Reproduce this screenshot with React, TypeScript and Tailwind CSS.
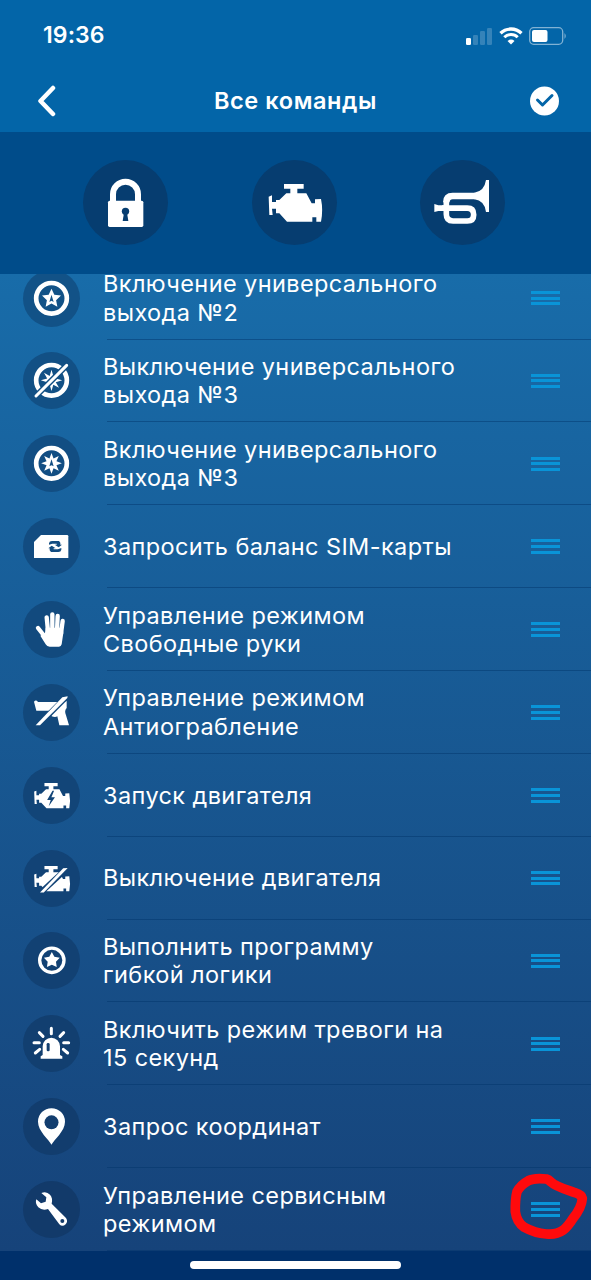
import type { ReactNode } from "react";

type Command = {
  lines: string[];
  color: string;
  icon: ReactNode;
};

const ENGINE =
  "M50 110 L60 106 V126 H72 V120 H82 L103 100 H115 V86 H96 V72 H155 V86 H136 V100 H163 L179 130 H189 V118 L207 117 Q214 150 207 185 H193 V172 H181 V185 H105 L82 160 H72 V146 H60 L62 165 H52 Z";

function starPoints(cx: number, cy: number, outer: number, inner: number, tips: number) {
  const points: string[] = [];
  for (let i = 0; i < tips * 2; i++) {
    const r = i % 2 === 0 ? outer : inner;
    const a = (Math.PI * i) / tips - Math.PI / 2;
    points.push(`${(cx + r * Math.cos(a)).toFixed(1)},${(cy + r * Math.sin(a)).toFixed(1)}`);
  }
  return points.join(" ");
}

function Glyph({ size = 171, children }: { size?: number; children: ReactNode }) {
  return (
    <svg viewBox={`0 0 ${size} ${size}`} className="size-full" fill="none">
      {children}
    </svg>
  );
}

const star5 = (
  <Glyph>
    <circle cx="85.5" cy="85" r="46" stroke="white" strokeWidth="14" />
    <polygon points={starPoints(85.5, 86, 30, 14.5, 5)} fill="white" />
    <path d="M85.5 74 L92 96 L85.5 92 L79 96 Z" fill="currentColor" />
  </Glyph>
);

const star8 = (
  <Glyph>
    <circle cx="85.5" cy="85" r="46" stroke="white" strokeWidth="14" />
    <polygon points={starPoints(85.5, 85, 31, 16, 8)} fill="white" />
    <path d="M85.5 73 L92 94 L85.5 91 L79 94 Z" fill="currentColor" />
  </Glyph>
);

const star8Off = (
  <Glyph>
    <circle cx="85.5" cy="85" r="46" stroke="white" strokeWidth="14" />
    <polygon points={starPoints(85.5, 85, 32, 14, 8)} fill="white" />
    <path d="M36 135 L134 37" stroke="currentColor" strokeWidth="18" />
    <path d="M39 132 L131 40" stroke="white" strokeWidth="9" strokeLinecap="round" />
  </Glyph>
);

const sim = (
  <Glyph>
    <path d="M54 51 H132 Q136 51 136 55 V120 H33 V72 Z" fill="white" />
    <path
      d="M78 80 V76 Q79 69 87 69 H108 L112 74 V80 H117 L107 88 L95 80 H101 V77 H88 Z"
      fill="currentColor"
    />
    <path
      d="M115 90 V95 Q114 102 106 102 H84 L80 97 V91 H76 L86 83 L98 91 H92 V94 H105 Z"
      fill="currentColor"
    />
  </Glyph>
);

const hand = (
  <Glyph>
    <path
      d="M45 81 L64 105 M71 49 L75 90 M88 40 V88 M104 45 L102 90 M119 60 L114 98"
      stroke="white"
      strokeWidth="13"
      strokeLinecap="round"
    />
    <path
      d="M68 80 H119 L121 96 L116 130 Q114 137 108 137 H80 Q72 137 68 130 L52 104 L66 96 Z"
      fill="white"
    />
  </Glyph>
);

const gunOff = (
  <Glyph>
    <path
      d="M33 53 Q39 46 45 54 H122 L131 51 V72 Q123 80 129 94 L138 124 H109 L103 97 Q97 101 86 97 L82 80 H40 Z"
      fill="white"
    />
    <path d="M43 126 L129 40" stroke="currentColor" strokeWidth="17" />
    <path d="M38 124 L118 40 L134 37 L133 42 L51 124 Z" fill="white" />
  </Glyph>
);

const engineStart = (
  <Glyph size={255}>
    <path d={ENGINE} fill="white" />
    <path d="M132 106 L108 148 H124 L115 176 L143 135 H127 L139 106 Z" fill="currentColor" />
  </Glyph>
);

const engineOff = (
  <Glyph size={255}>
    <path d={ENGINE} fill="white" />
    <path d="M78 192 L197 82" stroke="currentColor" strokeWidth="25" />
    <path d="M76 190 L180 82 L200 80 L93 190 Z" fill="white" />
  </Glyph>
);

const logic = (
  <Glyph>
    <circle cx="86.5" cy="85" r="36.5" stroke="white" strokeWidth="10" />
    <polygon points={starPoints(86.5, 85, 25, 13, 5)} fill="white" />
  </Glyph>
);

const siren = (
  <Glyph>
    <path
      d="M85 40 V56 M49 53 L60 64 M122 53 L111 64 M33 83 H49 M122 83 H137 M37 114 L50 103 M134 114 L121 103"
      stroke="white"
      strokeWidth="9"
      strokeLinecap="round"
    />
    <path d="M59 120 V94 a26 26 0 0 1 52 0 V120 L118 124 V131 H53 V124 Z" fill="white" />
    <rect x="71" y="84" width="9" height="25" rx="4" fill="currentColor" />
  </Glyph>
);

const pin = (
  <Glyph>
    <path
      d="M85.5 140 C78 124 45 100 45 71 a40.5 40.5 0 0 1 81 0 C126 100 93 124 85.5 140 Z"
      fill="white"
    />
    <circle cx="85.5" cy="73" r="21" fill="currentColor" />
  </Glyph>
);

const wrench = (
  <Glyph>
    <path
      d="M55 36 Q70 29 81 41 Q90 51 86 68 L129 111 Q136 121 128 130 Q118 139 109 130 L75 84 Q58 90 46 79 Q35 68 40 55 L54 67 L68 62 L70 49 Z"
      fill="white"
    />
    <circle cx="118" cy="120" r="6" fill="currentColor" />
  </Glyph>
);

const lock = (
  <Glyph size={255}>
    <path d="M90 126 V103 a37.5 37.5 0 0 1 75 0 V126" stroke="white" strokeWidth="18" />
    <rect x="75" y="122" width="106" height="79" rx="5" fill="white" />
    <circle cx="127.5" cy="154" r="11" fill="currentColor" />
    <path d="M123 158 H132 L136 183 H119 Z" fill="currentColor" />
  </Glyph>
);

const engine = (
  <Glyph size={255}>
    <path d={ENGINE} fill="white" />
  </Glyph>
);

const horn = (
  <Glyph size={255}>
    <path d="M198 60 H207 V156 H198 Q194 122 163 118 V98 Q193 94 198 60 Z" fill="white" />
    <path d="M165 108 H98 Q79 108 79 127" stroke="white" strokeWidth="20" />
    <path
      d="M79 125 V163 Q79 183 99 183 H142 Q161 183 161 164 Q161 144.500 142 144.500 H66"
      stroke="white"
      strokeWidth="17"
    />
    <path d="M43 132 L55 136 H72 V153 H55 L43 156 Z" fill="white" />
  </Glyph>
);

const tools = [lock, engine, horn];

const commands: Command[] = [
  { lines: ["Включение универсального", "выхода №2"], color: "text-[#125287]", icon: star5 },
  { lines: ["Выключение универсального", "выхода №3"], color: "text-[#125085]", icon: star8Off },
  { lines: ["Включение универсального", "выхода №3"], color: "text-[#124e83]", icon: star8 },
  { lines: ["Запросить баланс SIM-карты"], color: "text-[#124c81]", icon: sim },
  { lines: ["Управление режимом", "Свободные руки"], color: "text-[#124a7e]", icon: hand },
  { lines: ["Управление режимом", "Антиограбление"], color: "text-[#12487b]", icon: gunOff },
  { lines: ["Запуск двигателя"], color: "text-[#124578]", icon: engineStart },
  { lines: ["Выключение двигателя"], color: "text-[#124376]", icon: engineOff },
  { lines: ["Выполнить программу", "гибкой логики"], color: "text-[#124173]", icon: logic },
  { lines: ["Включить режим тревоги на", "15 секунд"], color: "text-[#123f70]", icon: siren },
  { lines: ["Запрос координат"], color: "text-[#123d6e]", icon: pin },
  { lines: ["Управление сервисным", "режимом"], color: "text-[#123a6a]", icon: wrench },
];

function StatusBar() {
  return (
    <div className="flex h-[70px] items-center justify-between pt-px pr-6 pl-[43px]">
      <span className="text-[23px] font-semibold tracking-[0.1px]">19:36</span>
      <div className="flex items-center gap-[6px]">
        <svg width="27" height="18" viewBox="0 0 27 18" fill="white">
          <rect x="0" y="11" width="5" height="7" rx="1.300" />
          <rect x="7" y="8" width="5" height="10" rx="1.300" opacity="0.2" />
          <rect x="14" y="4" width="5" height="14" rx="1.300" opacity="0.2" />
          <rect x="21" y="1" width="5" height="17" rx="1.300" opacity="0.2" />
        </svg>
        <svg width="24" height="18" viewBox="0 0 24 18" fill="none" stroke="white">
          <path d="M1.500 6.300 A15 15 0 0 1 22.500 6.300" strokeWidth="3.300" />
          <path d="M5.300 10.300 A9.500 9.500 0 0 1 18.700 10.300" strokeWidth="3" />
          <path d="M12 17.500 L8.500 14 A5 5 0 0 1 15.500 14 Z" fill="white" stroke="none" />
        </svg>
        <svg width="38" height="18" viewBox="0 0 38 18" fill="none">
          <rect x="0.700" y="0.700" width="33" height="16.600" rx="4" stroke="white" strokeOpacity="0.5" strokeWidth="1.300" />
          <rect x="3" y="3" width="15.500" height="12" rx="2" fill="white" />
          <path d="M35.500 6 Q38 9 35.500 12 Z" fill="white" fillOpacity="0.5" />
        </svg>
      </div>
    </div>
  );
}

function NavBar() {
  return (
    <div className="flex h-[62px] items-center justify-between pr-8 pb-px pl-[37px]">
      <svg width="24" height="32" viewBox="0 0 24 32" fill="none">
        <path d="M16 3 L3.500 16 L16 29" stroke="white" strokeWidth="4.500" strokeLinecap="round" strokeLinejoin="round" />
      </svg>
      <h1 className="text-[23.500px] font-semibold tracking-[0.600px]">Все команды</h1>
      <svg width="29" height="30" viewBox="0 0 29 30" fill="none">
        <circle cx="14.500" cy="15" r="14.500" fill="white" />
        <path d="M7.500 14 L12.500 19 L22 9.500" stroke="#0365a8" strokeWidth="3" strokeLinecap="round" strokeLinejoin="round" />
      </svg>
    </div>
  );
}

function CommandRow({ command, marked }: { command: Command; marked: boolean }) {
  return (
    <li className="relative flex h-[82.860px] shrink-0 items-center pr-[31px] pl-[23px]">
      <div className={`size-[57px] shrink-0 rounded-full bg-current ${command.color}`}>
        {command.icon}
      </div>
      <p className="ml-[23px] flex-1 pt-px text-[23.500px] leading-[28.500px] tracking-[0.400px] whitespace-nowrap">
        {command.lines.map((line) => (
          <span key={line} className="block">
            {line}
          </span>
        ))}
      </p>
      <div className="flex flex-col gap-[2.800px]">
        <span className="h-[3px] w-[29px] bg-[#0994d8]" />
        <span className="h-[3px] w-[29px] bg-[#0994d8]" />
        <span className="h-[3px] w-[29px] bg-[#0994d8]" />
      </div>
      <div className="absolute right-0 bottom-0 left-[107px] h-px bg-[#003468]/45" />
      {marked && (
        <svg className="absolute right-0 bottom-[4px] h-[84px] w-[84px]" viewBox="0 0 252 252" fill="none">
          <path
            d="M118 48 Q82 44 64 53 Q40 66 30 86 Q24 110 25 146 Q29 178 52 193 Q84 211 118 213 Q148 216 168 202 Q183 190 198 166 Q224 134 226 106 Q224 95 204 89 C180 80 148 72 132 57 Q125 50 118 48 Z"
            stroke="#ff0a0c"
            strokeWidth="29"
            strokeLinejoin="round"
          />
        </svg>
      )}
    </li>
  );
}

export default function App() {
  return (
    <div className="flex h-[1280px] w-[591px] flex-col overflow-hidden bg-[#00306b] font-['Inter',sans-serif] text-white">
      <header className="bg-[#0365a8]">
        <StatusBar />
        <NavBar />
      </header>

      <div className="flex h-[142px] items-center justify-between bg-[#004c8a] pr-[86px] pb-px pl-[83px]">
        {tools.map((tool, i) => (
          <div key={i} className="size-[85px] rounded-full bg-current text-[#063d70]">
            {tool}
          </div>
        ))}
      </div>

      <ul className="flex h-[977px] flex-col justify-end overflow-hidden bg-linear-to-b from-[#186ca9] to-[#16437a]">
        {commands.map((command, i) => (
          <CommandRow key={i} command={command} marked={i === commands.length - 1} />
        ))}
      </ul>

      <footer className="flex h-[29px] justify-center pt-[10px]">
        <div className="h-2 w-[211px] rounded-full bg-white" />
      </footer>
    </div>
  );
}
